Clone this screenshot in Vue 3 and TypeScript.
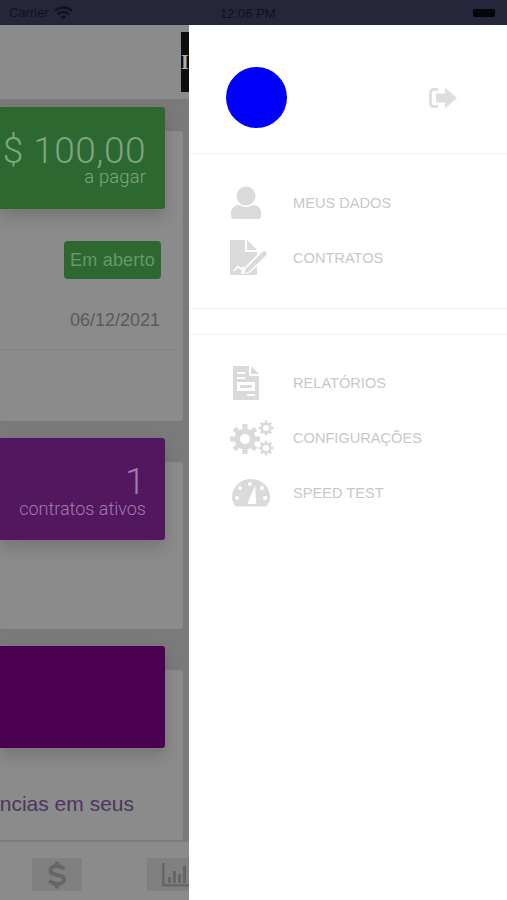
<script setup lang="ts">
const firstMenu = [
  { label: 'MEUS DADOS', icon: 'user' },
  { label: 'CONTRATOS', icon: 'contract' }
]

const secondMenu = [
  { label: 'RELATÓRIOS', icon: 'report' },
  { label: 'CONFIGURAÇÕES', icon: 'gears' },
  { label: 'SPEED TEST', icon: 'speed' }
]
</script>

<template>
  <div class="page">
    <div class="status-bar">
      <div class="carrier">
        <span>Carrier</span>
        <svg width="19" height="14" viewBox="0 0 19 14" fill="none" stroke="#11111c" stroke-width="2.4">
          <path d="M1 5a12 12 0 0 1 17 0" />
          <path d="M4 8.4a7.6 7.6 0 0 1 11 0" />
          <path d="M9.5 13.4 6.9 10.8a3.6 3.6 0 0 1 5.2 0z" fill="#11111c" stroke="none" />
        </svg>
      </div>
      <span class="clock">12:06 PM</span>
      <div class="battery"></div>
    </div>

    <div class="content">
      <div class="main">
        <div class="topbar">
          <div class="logo"><span>I</span></div>
        </div>

        <div class="feed">
          <section class="card card-bill">
            <div class="banner green">
              <strong>$ 100,00</strong>
              <small>a pagar</small>
            </div>
            <div class="bill-info">
              <span class="tag">Em aberto</span>
              <span class="date">06/12/2021</span>
            </div>
          </section>

          <section class="card card-contracts">
            <div class="banner purple">
              <strong>1</strong>
              <small>contratos ativos</small>
            </div>
          </section>

          <section class="card card-news">
            <div class="banner plum"></div>
            <p class="news">ncias em seus</p>
          </section>
        </div>

        <nav class="tabs">
          <div class="tab tab-money">
            <svg width="20" height="30" viewBox="0 0 20 30" fill="none" stroke="#666" stroke-width="4">
              <path d="M17 9.500C15 6.500 12.500 6 10 6 6 6 3.500 7.800 3.500 10.500 3.500 17 17 13 17 19.500 17 22.300 14 24 10 24 7 24 4.500 23 2.500 20.500" />
              <path d="M10 1.500v4.500M10 24v4.500" />
            </svg>
          </div>
          <div class="tab tab-chart">
            <svg width="42" height="28" viewBox="0 0 42 28" fill="#666">
              <path d="M2 2h2.500v21H34v2.500H2z" />
              <rect x="8" y="16" width="3" height="6" />
              <rect x="13" y="10" width="3" height="12" />
              <rect x="18" y="13" width="3" height="9" />
              <rect x="23" y="5" width="3" height="17" />
            </svg>
          </div>
        </nav>
      </div>

      <aside class="drawer">
        <header class="drawer-head">
          <div class="avatar"></div>
          <svg class="logout" width="30" height="24" viewBox="0 0 30 24" fill="#dedede">
            <path d="M10 2H5.500A4.500 4.500 0 0 0 1 6.500v11A4.500 4.500 0 0 0 5.500 22H10v-3H5.500A1.500 1.500 0 0 1 4 17.500v-11A1.500 1.500 0 0 1 5.500 5H10z" />
            <path d="M17 1.500 29 12 17 22.500V16.500H8v-9h9z" />
          </svg>
        </header>

        <ul class="menu">
          <li v-for="item in firstMenu" :key="item.label" class="menu-item">
            <span class="menu-icon" :class="'icon-' + item.icon">
              <svg v-if="item.icon === 'user'" width="32" height="34" viewBox="0 0 32 34" fill="#dadada">
                <circle cx="16" cy="10" r="9.500" />
                <path d="M1 30v-3c0-5 3.500-8 8.500-8 2 1.500 4.500 2 6.500 2s4.500-.5 6.500-2c5 0 8.500 3 8.500 8v3c0 2-1 3-3 3H4c-2 0-3-1-3-3z" />
              </svg>
              <svg v-else width="40" height="36" viewBox="0 0 40 36" fill="#dadada">
                <path d="M0 0H15V12H27V15L12 30 11 34 19 33 27 26V35H0z" />
                <path d="M17 0 27 10H17z" />
                <path d="M14 33 16 28.500 34 10.500 37.500 14 19 31.500z" />
                <path d="M4 31l4-4.500 3 2.500 3-2" fill="none" stroke="#fff" stroke-width="1.800" />
              </svg>
            </span>
            <span class="menu-label">{{ item.label }}</span>
          </li>
        </ul>

        <div class="spacer"></div>

        <ul class="menu menu-second">
          <li v-for="item in secondMenu" :key="item.label" class="menu-item">
            <span class="menu-icon" :class="'icon-' + item.icon">
              <svg v-if="item.icon === 'report'" width="27" height="36" viewBox="0 0 27 36" fill="#dadada">
                <path fill-rule="evenodd" d="M0 1h16v10h10v24H0zM4 7v2h8V7zM4 12v2h8v-2zM4 17v9h18v-9zM7 20h12v3H7zM14 29v2h8v-2z" />
                <path d="M18 1l8 8h-8z" />
              </svg>
              <svg v-else-if="item.icon === 'gears'" width="44" height="36" viewBox="0 0 44 36" fill="#dadada">
                <g>
                  <circle cx="15" cy="19" r="10.500" />
                  <g stroke="#dadada" stroke-width="5">
                    <path d="M15 4v30M0 19h30M4.400 8.400l21.200 21.200M4.400 29.600 25.600 8.400" />
                  </g>
                  <circle cx="15" cy="19" r="5" fill="#fff" />
                </g>
                <g>
                  <circle cx="36" cy="8" r="5.500" />
                  <g stroke="#dadada" stroke-width="2.500">
                    <path d="M36 .5v15M28.500 8h15M30.700 2.700l10.600 10.600M30.700 13.300 41.300 2.700" />
                  </g>
                  <circle cx="36" cy="8" r="3" fill="#fff" />
                </g>
                <g>
                  <circle cx="36" cy="28" r="5.500" />
                  <g stroke="#dadada" stroke-width="2.500">
                    <path d="M36 20.500v15M28.500 28h15M30.700 22.700l10.600 10.600M30.700 33.300l10.600-10.600" />
                  </g>
                  <circle cx="36" cy="28" r="3" fill="#fff" />
                </g>
              </svg>
              <svg v-else width="40" height="29" viewBox="0 0 40 29" fill="#dadada">
                <path d="M1 19C1 8.500 9.500 1 20 1s19 7.500 19 18c0 3-.8 5.500-2.500 8-.8 1.200-1.700 1.500-3 1.500h-27c-1.300 0-2.200-.3-3-1.500C1.800 24.500 1 22 1 19z" />
                <g fill="#fff">
                  <path d="M24 7 25 22.500 25.500 26H16.500L18 22z" />
                  <circle cx="6" cy="20" r="2" />
                  <circle cx="34" cy="20" r="2" />
                  <circle cx="9" cy="10" r="2" />
                  <circle cx="31" cy="10" r="2" />
                  <circle cx="19" cy="6" r="2" />
                </g>
              </svg>
            </span>
            <span class="menu-label">{{ item.label }}</span>
          </li>
        </ul>
      </aside>
    </div>
  </div>
</template>

<style>
html,
body {
  margin: 0;
  background: #fff;
}
</style>

<style scoped>
.page {
  width: 507px;
  height: 900px;
  display: flex;
  flex-direction: column;
  overflow: hidden;
  font-family: 'Liberation Sans', Arial, sans-serif;
}

.status-bar {
  height: 25px;
  flex: none;
  position: relative;
  display: flex;
  align-items: center;
  justify-content: space-between;
  padding: 0 12px 0 9px;
  box-sizing: border-box;
  background: #26263a;
  color: #11111c;
  font-size: 13px;
}

.carrier {
  display: flex;
  align-items: center;
  gap: 5px;
}

.clock {
  position: absolute;
  left: 220px;
  top: 6px;
  font-size: 13px;
}

.battery {
  width: 22px;
  height: 8px;
  border-radius: 2px;
  background: #05050a;
}

.content {
  flex: 1;
  display: flex;
  min-height: 0;
}

.main {
  width: 189px;
  flex: none;
  display: flex;
  flex-direction: column;
  overflow: hidden;
  background: #7a7a7a;
}

.topbar {
  height: 74px;
  flex: none;
  display: flex;
  justify-content: flex-end;
  padding-top: 7px;
  box-sizing: border-box;
  background: #8b8b8b;
}

.logo {
  width: 8px;
  height: 60px;
  display: flex;
  align-items: center;
  background: #0d0d0d;
  color: #aaa;
  font: 700 20px 'Liberation Serif', serif;
  overflow: hidden;
}

.feed {
  flex: 1;
  display: flex;
  flex-direction: column;
  gap: 41px;
  padding-top: 32px;
}

.card {
  width: 183px;
  position: relative;
  box-sizing: border-box;
  border-radius: 2px;
  background: #8b8b8b;
}

.card-bill {
  height: 290px;
}

.card-contracts {
  height: 167px;
}

.card-news {
  height: 170px;
}

.banner {
  position: absolute;
  left: 0;
  top: -24px;
  width: 165px;
  height: 102px;
  box-sizing: border-box;
  padding: 26px 19px 0 0;
  display: flex;
  flex-direction: column;
  align-items: flex-end;
  border-radius: 0 3px 3px 0;
  box-shadow: 0 8px 16px rgba(0, 0, 0, 0.16);
  font-family: Roboto, 'Liberation Sans', sans-serif;
  font-weight: 300;
}

.banner strong {
  font-weight: 300;
  font-size: 37px;
  line-height: 36px;
  letter-spacing: 0.5px;
}

.banner small {
  font-size: 18.500px;
  line-height: 17px;
  letter-spacing: 0.1px;
}

.green {
  background: #2c6830;
  color: #7fa581;
}

.purple {
  background: #52175f;
  color: #a27aab;
}

.purple small {
  font-size: 18px;
  letter-spacing: 0;
}

.plum {
  background: #4c0052;
}

.bill-info {
  position: absolute;
  top: 110px;
  right: 22px;
  display: flex;
  flex-direction: column;
  align-items: flex-end;
  gap: 31px;
}

.card-bill::after {
  content: '';
  position: absolute;
  left: 0;
  right: 8px;
  top: 218px;
  height: 1px;
  background: #818181;
}

.tag {
  width: 97px;
  height: 38px;
  box-sizing: border-box;
  border-radius: 4px;
  background: #2c6830;
  color: #669a69;
  font-size: 18px;
  line-height: 38px;
  text-align: center;
  letter-spacing: 0.2px;
}

.date {
  font-size: 18px;
  line-height: 20px;
  color: #5a5a5a;
  margin-right: 1px;
}

.news {
  position: absolute;
  right: 49px;
  top: 120px;
  margin: 0;
  font-size: 21px;
  line-height: 28px;
  color: #4e3560;
  white-space: nowrap;
}

.tabs {
  height: 59px;
  flex: none;
  position: relative;
  background: #8b8b8b;
  border-top: 1px solid #7f7f7f;
  box-sizing: border-box;
}

.tab {
  position: absolute;
  top: 16px;
  height: 33px;
  display: flex;
  align-items: center;
  background: #808080;
}

.tab-money {
  left: 32px;
  width: 50px;
  justify-content: center;
}

.tab-chart {
  left: 147px;
  width: 42px;
  overflow: hidden;
  padding-left: 13px;
  box-sizing: border-box;
}

.tab-chart svg {
  flex: none;
}

.drawer {
  flex: 1;
  background: #fff;
  color: #c8c8c8;
}

.drawer-head {
  height: 129px;
  display: flex;
  align-items: center;
  justify-content: space-between;
  padding: 17px 49px 0 37px;
  box-sizing: border-box;
  border-bottom: 1px solid #f0f0f0;
}

.avatar {
  width: 61px;
  height: 61px;
  border-radius: 50%;
  background: #0000fb;
}

.logout {
  display: block;
}

.menu {
  list-style: none;
  margin: 0;
  padding: 21px 0 0;
}

.menu-second {
  padding-top: 20px;
}

.menu-item {
  height: 55px;
  display: flex;
  align-items: center;
}

.menu-icon {
  width: 63px;
  margin-left: 41px;
  display: flex;
  box-sizing: border-box;
}

.icon-report {
  padding-left: 3px;
}

.icon-speed {
  padding-left: 1px;
}

.menu-label {
  font-size: 14.600px;
}

.spacer {
  height: 25px;
  margin-top: 23px;
  border-top: 1px solid #f0f0f0;
  border-bottom: 1px solid #f0f0f0;
}
</style>
